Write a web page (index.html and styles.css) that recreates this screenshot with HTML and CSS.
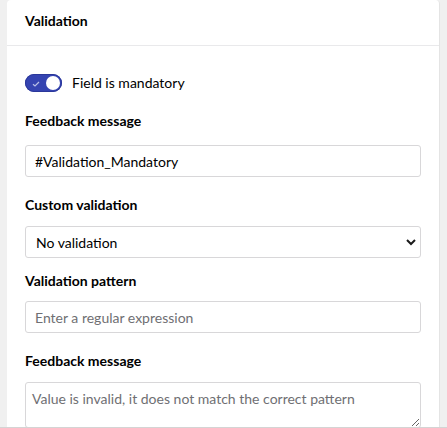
FILE: index.html
```html
<!DOCTYPE html>
<html lang="en">
<head>
<meta charset="utf-8">
<title>Validation</title>
<link rel="stylesheet" href="styles.css">
</head>
<body>
<div class="page">
  <section class="card">
    <header class="card-header">Validation</header>
    <div class="card-body">
      <label class="toggle-row">
        <span class="toggle">
          <svg class="toggle-check" width="8" height="6" viewBox="0 0 8 6"><path d="M1 3.2 L3 5 L7 1" fill="none" stroke="#b9bfe6" stroke-width="1.2"/></svg>
          <span class="toggle-knob"></span>
        </span>
        <span class="toggle-label">Field is mandatory</span>
      </label>

      <div class="field field-1">
        <div class="label">Feedback message</div>
        <input class="control" type="text" value="#Validation_Mandatory">
      </div>

      <div class="field field-2">
        <div class="label">Custom validation</div>
        <div class="select-wrap">
          <select class="control select">
            <option>No validation</option>
          </select>
          <svg class="chevron" width="12" height="8" viewBox="0 0 12 8"><path d="M2 2 L6 6 L10 2" fill="none" stroke="#1b1b1b" stroke-width="2"/></svg>
        </div>
      </div>

      <div class="field field-3">
        <div class="label">Validation pattern</div>
        <input class="control" type="text" placeholder="Enter a regular expression">
      </div>

      <div class="field field-4">
        <div class="label">Feedback message</div>
        <textarea class="control textarea" placeholder="Value is invalid, it does not match the correct pattern"></textarea>
      </div>
    </div>
  </section>
</div>
</body>
</html>
```
FILE: styles.css
```css
* { box-sizing: border-box; }
html, body { margin: 0; padding: 0; }
body {
  background: #f0f0f0;
  font-family: Lato, "Open Sans", sans-serif;
  font-size: 14px;
  color: #1b1b1b;
}
.page {
  height: 428px;
  overflow: hidden;
  border-bottom: 1px solid #d4d4d4;
}
.card {
  margin-left: 7px;
  width: 433px;
  background: #fff;
  border-radius: 4px 4px 0 0;
  border-right: 1px solid #e4e4e4;
  min-height: 430px;
}
.card-header {
  font-weight: 700;
  line-height: 20px;
  padding: 11px 18px 14px;
  border-bottom: 1px solid #e9e9eb;
  color: #000;
}
.card-body {
  padding: 28px 18px 0;
}
.toggle-row {
  display: flex;
  align-items: center;
  gap: 10px;
  height: 18px;
}
.toggle {
  position: relative;
  width: 37px;
  height: 18px;
  border-radius: 9px;
  background: #3544b1;
  box-shadow: inset 0 0 0 1px #2b389a;
  display: block;
  flex: none;
}
.toggle-check {
  position: absolute;
  left: 7px;
  top: 7px;
}
.toggle-knob {
  position: absolute;
  right: 2px;
  top: 2px;
  width: 14px;
  height: 14px;
  border-radius: 50%;
  background: #fff;
}
.toggle-label {
  color: #000;
  line-height: 18px;
}
.label {
  font-weight: 700;
  line-height: 20px;
  color: #000;
}
.control {
  display: block;
  width: 396px;
  height: 32px;
  border: 1px solid #d8d7d9;
  border-radius: 3px;
  padding: 0 9px;
  font-family: Lato, "Open Sans", sans-serif;
  font-size: 14px;
  color: #000;
  background: #fff;
  outline: none;
}
.control::placeholder { color: #6f6f73; }
.field-1 { margin-top: 19px; }
.field-1 .label { margin-bottom: 14px; }
.field-2 { margin-top: 18px; }
.field-2 .label { margin-bottom: 11px; }
.field-3 { margin-top: 13px; }
.field-3 .label { margin-bottom: 10px; }
.field-4 { margin-top: 18px; }
.field-4 .label { margin-bottom: 11px; }
.select-wrap { position: relative; width: 396px; }
.select {
  appearance: none;
  -webkit-appearance: none;
  padding-left: 10px;
}
.chevron {
  position: absolute;
  right: 4px;
  top: 12px;
  pointer-events: none;
}
.textarea {
  height: 46px;
  padding: 6px 6px;
  resize: vertical;
  line-height: 20px;
}
```
